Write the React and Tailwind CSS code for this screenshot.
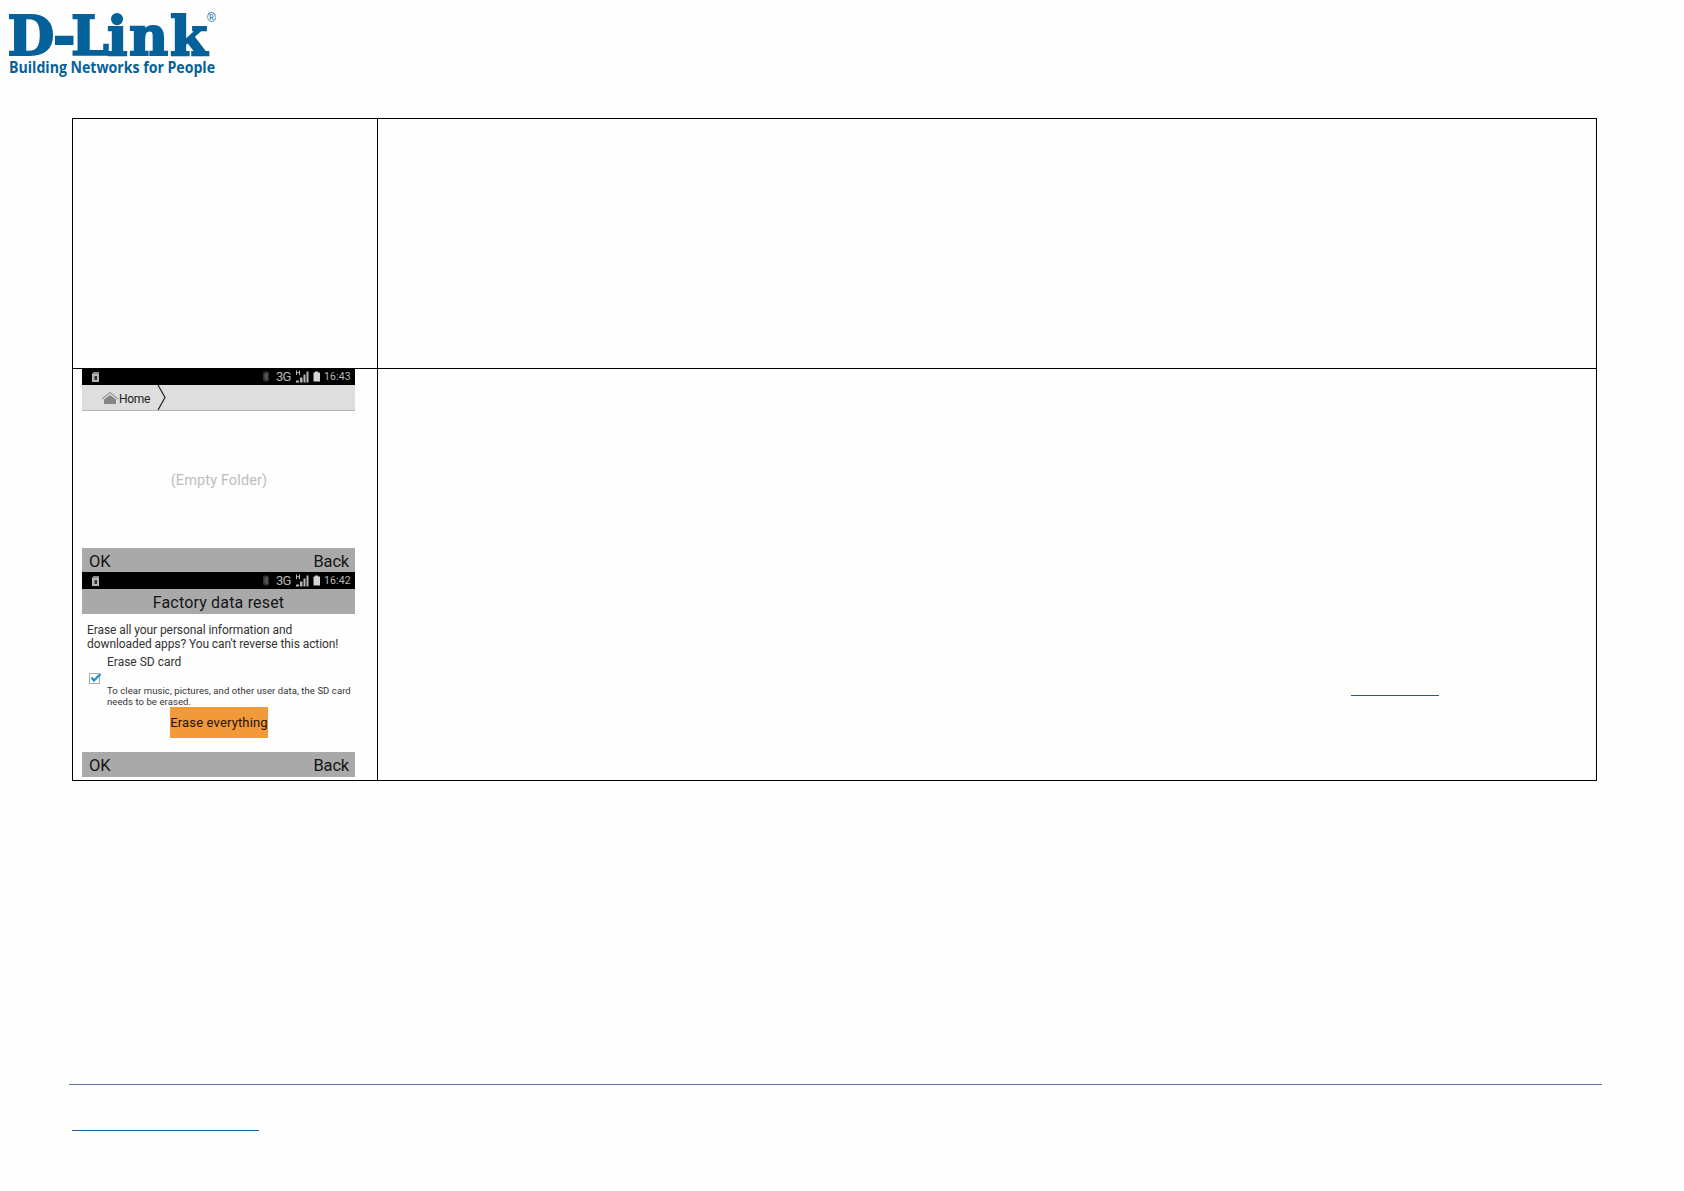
import React from 'react';

const Logo = () => (
  <svg className="overflow-visible" width="240" height="90" viewBox="0 0 240 90" fill="#05619a">
    <text
      x="7.5 53 71 107 129 170"
      y="54.5"
      fontFamily="DejaVu Serif"
      fontWeight="700"
      fontSize="54"
      stroke="#05619a"
      strokeWidth="2"
    >
      D-Link
    </text>
    <text x="207" y="22" fontFamily="Liberation Sans" fontSize="12">®</text>
    <text
      x="9"
      y="73"
      fontFamily="Open Sans"
      fontWeight="700"
      fontSize="16"
      textLength="206"
      lengthAdjust="spacingAndGlyphs"
    >
      Building Networks for People
    </text>
  </svg>
);

const StatusBar = ({ time }) => (
  <div className="flex h-[17px] items-center bg-black pl-[10px] pr-1 text-[#b8b8b8]">
    {/* SD card */}
    <svg width="7" height="10" viewBox="0 0 7 10">
      <path d="M0 2L1.500 0H7V10H0Z" fill="#b4b4b4" />
      <path d="M2 0V2M4 0V2M6 0V2" stroke="#333" strokeWidth=".6" />
      <path d="M2.500 4H5V8H2.500Z" fill="#333" />
    </svg>
    <div className="ml-auto flex h-full items-center">
      {/* Bluetooth */}
      <svg width="6" height="11" viewBox="0 0 6 11">
        <rect width="6" height="10" y=".5" rx="2" fill="#2f2f2f" />
        <path d="M1 3.5L5 7.5L3 9V2L5 3.5L1 7.5" fill="none" stroke="#777" strokeWidth=".7" />
      </svg>
      <span className="ml-[7px] w-[15px] whitespace-nowrap text-[13px] leading-[15px] tracking-[-0.7px]">3G</span>
      {/* Signal */}
      <svg className="ml-[4px]" width="14" height="14" viewBox="0 0 14 14">
        <path d="M1.500 .5V5M4.500 .5V5M1.500 2.700H4.500" stroke="#bbb" fill="none" />
        <path d="M1 12.500V10.500H4V12.500ZM5 12.500V7.500H7.500V12.500ZM8.500 12.500V4.500H10.500V12.500ZM11.500 12.500V1.500H13.500V12.500Z" fill="#b8b8b8" />
      </svg>
      {/* Battery */}
      <svg className="ml-[4px]" width="7" height="12" viewBox="0 0 7 12">
        <path d="M2 .5H5V1.500H7V10.500H.5V1.500H2Z" fill="#d4d4d4" />
      </svg>
      <span className="ml-[4px] w-[27px] whitespace-nowrap pt-px text-[10.5px] leading-[16px] tracking-[0.1px]">{time}</span>
    </div>
  </div>
);

const SoftKeys = () => (
  <div className="flex flex-none items-center justify-between bg-[#a9a9a9] pl-[7px] pr-[6px] pt-0.5 text-[16.5px] leading-[23px] text-[#151515]">
    <span className="tracking-[-0.2px]">OK</span>
    <span className="tracking-[-0.2px]">Back</span>
  </div>
);

const FileScreen = () => (
  <div className="flex h-[204px] w-[273px] flex-col">
    <StatusBar time="16:43" />
    <div className="flex h-[26px] items-center border-b border-[#b5b5b5] bg-[#dedede] pl-[19px]">
      <svg width="18" height="14" viewBox="0 0 18 14">
        <path d="M1 8L9 1.500L17 8" fill="none" stroke="#999" strokeWidth="1.200" />
        <path d="M3 13V8.500L9 4L15 8.500V13Z" fill="#858585" />
      </svg>
      <span className="w-[31px] whitespace-nowrap pt-0.5 text-[12px] leading-[16px] tracking-[-0.3px] text-[#222]">Home</span>
      <svg className="ml-[7px]" width="10" height="25" viewBox="0 0 10 25">
        <path d="M1 0L8 12.500L1 25" fill="none" stroke="#222" strokeWidth="1.200" />
      </svg>
    </div>
    <div className="flex h-[137px] items-center justify-center pl-px pt-[2px] text-[14.5px] tracking-[0.12px] text-[#bcbcbc]">
      (Empty Folder)
    </div>
    <div className="h-6">
      <SoftKeys />
    </div>
  </div>
);

const ResetScreen = () => (
  <div className="relative flex h-[205px] w-[273px] flex-col">
    <StatusBar time="16:42" />
    <div className="h-[25px] bg-[#a9a9a9] pt-px text-center text-[16px] leading-[26px] tracking-[0.18px] text-[#151515]">
      Factory data reset
    </div>
    <div className="flex flex-1 flex-col pt-[9px] text-[#333]">
      <p className="whitespace-nowrap pl-[5px] text-[12px] leading-[14px] tracking-[-0.08px]">
        Erase all your personal information and
        <br />
        downloaded apps? You can't reverse this action!
      </p>
      <div className="flex pl-[7px]">
        <svg className="mt-[21px]" width="13" height="13" viewBox="0 0 13 13">
          <rect x=".5" y="1.500" width="10" height="10" fill="#fff" stroke="#aaa" />
          <path d="M2.500 5.500L5 8.500L11.500 2" fill="none" stroke="#2196c9" strokeWidth="2.400" />
        </svg>
        <div className="ml-[5px] whitespace-nowrap">
          <p className="pt-[3px] text-[12px] leading-[16px]">Erase SD card</p>
          <p className="pt-[15px] text-[9.5px] leading-[11px] tracking-[0.08px]">
            To clear music, pictures, and other user data, the SD card
            <br />
            needs to be erased.
          </p>
        </div>
      </div>
      <div className="ml-[88px] h-[31px] w-[98px] whitespace-nowrap bg-[#f2993a] text-center text-[13px] leading-[31px] tracking-[0.15px] text-[#1c1408]">
        Erase everything
      </div>
    </div>
    <SoftKeys />
  </div>
);

export default function App() {
  return (
    <div className="flex h-[1191px] w-[1684px] flex-col bg-[#fefefe] font-['Roboto',sans-serif]">
      <header className="h-[118px]">
        <Logo />
      </header>

      {/* Instructions table */}
      <main className="ml-[72px] grid h-[663px] w-[1525px] grid-cols-[305px_1219px] grid-rows-[250px_412px] border-l border-t border-black">
        <div className="border-b border-r border-black" />
        <div className="border-b border-r border-black" />
        <div className="border-b border-r border-black pl-[9px]">
          <div className="-mt-px">
            <FileScreen />
            <ResetScreen />
          </div>
        </div>
        <div className="border-b border-r border-black pl-[973px] pt-[326px]">
          <div className="h-px w-[88px] bg-[#1f5a94]" />
        </div>
      </main>

      {/* Footer */}
      <footer className="ml-[69px] mt-[303px] w-[1533px] border-t border-[#5878a8] pl-[3px] pt-[45px]">
        <div className="h-px w-[187px] bg-[#1563a0]" />
      </footer>
    </div>
  );
}
